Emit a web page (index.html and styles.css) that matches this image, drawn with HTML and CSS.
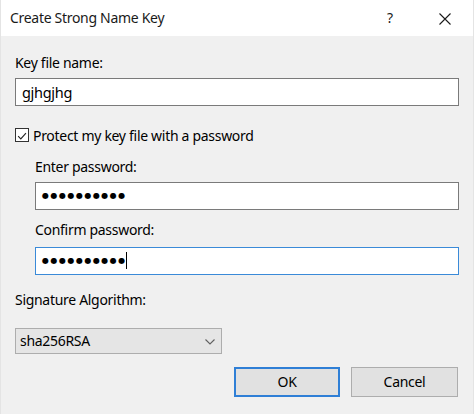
FILE: index.html
```html
<!DOCTYPE html>
<html>
<head>
<meta charset="utf-8">
<title>Create Strong Name Key</title>
<link rel="stylesheet" href="styles.css">
</head>
<body>
<div class="dialog">
  <div class="titlebar">
    <span class="title">Create Strong Name Key</span>
    <span class="help">?</span>
    <span class="close">
      <svg width="12" height="12" viewBox="0 0 12 12"><path d="M0.5 0.5 L11.5 11.5 M11.5 0.5 L0.5 11.5" stroke="#1a1a1a" stroke-width="1.1" fill="none"/></svg>
    </span>
  </div>
  <div class="content">
    <div class="label label-key">Key file name:</div>
    <div class="textbox tb-key">gjhgjhg</div>
    <div class="check-row">
      <span class="checkbox">
        <svg width="14" height="14" viewBox="0 0 14 14"><path d="M2.5 7.2 L5.6 10.3 L11.6 3.6" stroke="#222" stroke-width="1.3" fill="none"/></svg>
      </span>
      <span class="check-text">Protect my key file with a password</span>
    </div>
    <div class="indent">
      <div class="label label-enter">Enter password:</div>
      <div class="textbox tb-pass"><span class="dots">●●●●●●●●●●</span></div>
      <div class="label label-confirm">Confirm password:</div>
      <div class="textbox tb-pass focused"><span class="dots">●●●●●●●●●●</span><span class="caret"></span></div>
    </div>
    <div class="label label-sig">Signature Algorithm:</div>
    <div class="combo">
      <span>sha256RSA</span>
      <svg width="10" height="6" viewBox="0 0 10 6"><path d="M0.5 0.5 L5 5 L9.5 0.5" stroke="#606060" stroke-width="1.1" fill="none"/></svg>
    </div>
    <div class="buttons">
      <div class="btn btn-default">OK</div>
      <div class="btn">Cancel</div>
    </div>
  </div>
</div>
</body>
</html>
```
FILE: styles.css
```css
html, body {
  margin: 0;
  padding: 0;
}
body {
  width: 474px;
  height: 414px;
  overflow: hidden;
  background: #f0f0f0;
  font-family: "Noto Sans", "Open Sans", sans-serif;
  font-size: 14px;
  letter-spacing: -0.3px;
  color: #000;
}
.dialog {
  width: 474px;
  height: 414px;
  display: flex;
  flex-direction: column;
  box-sizing: border-box;
  border-left: 1px solid #e4e4e4;
  border-right: 1px solid #e4e4e4;
}
.titlebar {
  height: 36px;
  flex: none;
  background: #fff;
  display: flex;
  align-items: center;
  padding-left: 9px;
}
.title {
  flex: 1;
  font-size: 14px;
  color: #1a1a1a;
  padding-bottom: 1px;
}
.help {
  width: 10px;
  margin-right: 42px;
  font-size: 14px;
  color: #1a1a1a;
  padding-bottom: 1px;
}
.close {
  width: 12px;
  height: 12px;
  margin-right: 22px;
  display: flex;
  margin-top: 1px;
}
.content {
  display: flex;
  flex-direction: column;
  padding: 0 14px;
}
.label {
  height: 20px;
  line-height: 20px;
}
.label-key { margin-top: 17px; }
.textbox {
  height: 28px;
  box-sizing: border-box;
  border: 1px solid #7a7a7a;
  background: #fff;
  display: flex;
  align-items: center;
  padding-left: 5px;
  padding-bottom: 1px;
}
.tb-key { margin-top: 5px; font-size: 14.5px; padding-left: 6px; }
.check-row {
  margin-top: 19px;
  height: 20px;
  display: flex;
  align-items: center;
}
.checkbox {
  width: 14px;
  height: 14px;
  box-sizing: border-box;
  border: 1px solid #333;
  background: #fff;
  display: flex;
  margin-right: 4px;
}
.indent {
  display: flex;
  flex-direction: column;
  padding-left: 20px;
}
.label-enter { margin-top: 12px; }
.tb-pass { margin-top: 5px; padding-left: 6px; }
.label-confirm { margin-top: 10px; }
.focused {
  border-color: #3a8ad8;
  margin-top: 7px;
}
.dots {
  font-family: "DejaVu Sans", sans-serif;
  font-size: 8px;
  letter-spacing: 1.5px;
  color: #000;
}
.caret {
  width: 1px;
  height: 17px;
  background: #000;
  margin-left: -0.5px;
}
.label-sig { margin-top: 15px; }
.combo {
  margin-top: 18px;
  width: 207px;
  height: 26px;
  box-sizing: border-box;
  border: 1px solid #adadad;
  background: #e5e5e5;
  display: flex;
  align-items: center;
  justify-content: space-between;
  padding: 0 6px 1px 4px;
}
.combo svg { margin-top: 2px; }
.buttons {
  margin-top: 13px;
  display: flex;
  justify-content: flex-end;
  gap: 11px;
  padding-right: 1px;
}
.btn {
  width: 107px;
  height: 30px;
  box-sizing: border-box;
  border: 1px solid #adadad;
  background: #e1e1e1;
  display: flex;
  align-items: center;
  justify-content: center;
  padding-bottom: 1px;
}
.btn-default {
  border: 2px solid #2f7fd6;
  width: 106px;
}
```
